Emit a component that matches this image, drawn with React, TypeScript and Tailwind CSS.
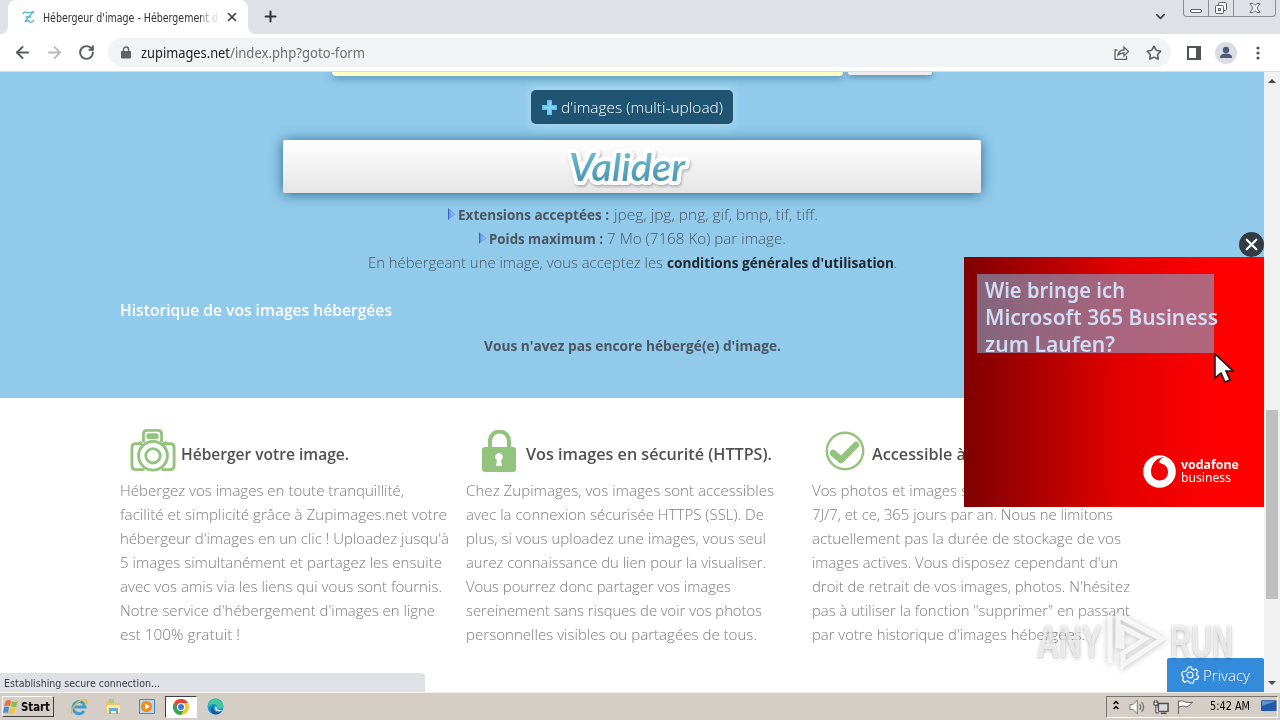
import { ReactNode, useLayoutEffect, useRef, useState } from 'react';
import { ArrowLeft, ArrowRight, ChevronDown, Plus, RotateCw, Star, X } from 'lucide-react';

interface FitProps {
  w: number;
  children: ReactNode;
  className?: string;
}

// Squeezes or stretches one run of text to a fixed width
function Fit({ w, children, className = '' }: FitProps) {
  const ref = useRef<HTMLSpanElement>(null);
  const [scale, setScale] = useState(1);

  useLayoutEffect(() => {
    if (ref.current) {
      setScale(w / ref.current.getBoundingClientRect().width);
    }
  }, [w]);

  return (
    <span className={`inline-block whitespace-nowrap ${className}`} style={{ width: w }}>
      <span ref={ref} className="inline-block origin-left whitespace-pre" style={{ transform: `scaleX(${scale})` }}>
        {children}
      </span>
    </span>
  );
}

const columns: { title: string; titleWidth: number; icon: ReactNode; lines: [string, number][] }[] = [
  {
    title: 'Héberger votre image.',
    titleWidth: 168,
    icon: <CameraIcon />,
    lines: [
      ['Hébergez vos images en toute tranquillité,', 284],
      ['facilité et simplicité grâce à Zupimages.net votre', 327],
      ["hébergeur d'images en un clic ! Uploadez jusqu'à", 329],
      ['5 images simultanément et partagez les ensuite', 322],
      ['avec vos amis via les liens qui vous sont fournis.', 322],
      ["Notre service d'hébergement d'images en ligne", 315],
      ['est 100% gratuit !', 120],
    ],
  },
  {
    title: 'Vos images en sécurité (HTTPS).',
    titleWidth: 246,
    icon: <LockIcon />,
    lines: [
      ['Chez Zupimages, vos images sont accessibles', 308],
      ['avec la connexion sécurisée HTTPS (SSL). De', 298],
      ['plus, si vous uploadez une images, vous seul', 300],
      ['aurez connaissance du lien pour la visualiser.', 300],
      ['Vous pourrez donc partager vos images', 265],
      ['sereinement sans risques de voir vos photos', 296],
      ['personnelles visibles ou partagées de tous.', 291],
    ],
  },
  {
    title: 'Accessible à',
    titleWidth: 94,
    icon: <CheckIcon />,
    lines: [
      ['Vos photos et images s', 156],
      ['7J/7, et ce, 365 jours par an. Nous ne limitons', 301],
      ['actuellement pas la durée de stockage de vos', 309],
      ["images actives. Vous disposez cependant d'un", 306],
      ["droit de retrait de vos images, photos. N'hésitez", 318],
      ['pas à utiliser la fonction "supprimer" en passant', 318],
      ["par votre historique d'images hébergées.", 273],
    ],
  },
];

function CameraIcon() {
  return (
    <svg width="46" height="45" viewBox="0 0 48 46" fill="none" stroke="#92c47d" strokeWidth="3" className="ml-[10px]">
      <path d="M14 14V6q0-4 4-4h11q4 0 4 4v8M13 16H6q-4 0-4 4v19q0 4 4 4h9M34 16h8q4 0 4 4v19q0 4-4 4h-9M9 17l3-3M36 14l3 3" />
      <rect x="18.5" y="6.5" width="10" height="3" rx="1.5" />
      <circle cx="24" cy="28.5" r="15" />
      <circle cx="24" cy="28.5" r="7.5" />
    </svg>
  );
}

function LockIcon() {
  return (
    <svg width="34" height="43" viewBox="0 0 34 43" className="ml-4">
      <path d="M8 19V11a9.5 9.5 0 0 1 19 0v8" fill="none" stroke="#92c47d" strokeWidth="4" />
      <rect y="17" width="34" height="25" rx="3" fill="#92c47d" />
      <path d="M17 23a3.8 3.8 0 0 1 2 7l1 6h-6l1-6a3.8 3.8 0 0 1 2-7z" fill="white" />
    </svg>
  );
}

function CheckIcon() {
  return (
    <svg width="40" height="40" viewBox="0 0 40 40" fill="none" stroke="#92c47d" className="mb-px ml-[13px]">
      <circle cx="20" cy="20" r="18.2" strokeWidth="2.4" />
      <path d="M8 22l8 7L31 14" strokeWidth="6.5" strokeLinecap="round" strokeLinejoin="round" />
    </svg>
  );
}

function TabStrip() {
  return (
    <div className="flex h-[34px] bg-[#dee1e6] pl-2 font-['DejaVu_Sans',sans-serif] font-normal">
      <div className="relative flex w-60 items-center rounded-t-lg bg-white">
        <svg width="8" height="8" className="absolute bottom-0 -left-2" fill="white"><path d="M8 0v8H0q8 0 8-8" /></svg>
        <svg width="8" height="8" className="absolute -right-2 bottom-0" fill="white"><path d="M0 0v8h8Q0 8 0 0" /></svg>
        <svg width="13" height="14" viewBox="0 0 14 14" className="ml-[14px] shrink-0" fill="none" stroke="#5ab3cf" strokeWidth="1.4">
          <path d="M1 4q1-3 4-2t8-1Q9 4 3 12q3-2 5 0t5-2M4 7h6" />
        </svg>
        <div className="relative ml-[8px] w-[175px] overflow-hidden">
          <Fit w={175} className="block text-[11.5px] leading-4 text-[#303236]">Hébergeur d'image - Hébergement d</Fit>
          <div className="absolute top-0 right-0 h-4 w-4 bg-linear-to-r from-white/40 to-white/90" />
        </div>
        <X size={14} strokeWidth={2.8} className="ml-[7px] shrink-0 text-[#3c4043]" />
      </div>
      <Plus size={17} strokeWidth={2.8} className="mt-2 ml-[14px] text-[#303439]" />
      <ChevronDown size={15} strokeWidth={2.8} className="mt-[9px] ml-auto text-[#40444b]" />
      <div className="mr-1 ml-[15px] flex h-[17px] w-[93px] rounded-b-[4px] border border-t-0 border-[#888c93] text-[#5e6269]">
        <div className="flex w-[25px] items-end justify-center border-r border-[#888c93] pb-[3px]">
          <div className="h-1 w-3 rounded-xs border border-[#5e6269] bg-white" />
        </div>
        <div className="flex w-[25px] justify-center border-r border-[#888c93]">
          <svg width="14" height="15" fill="white" stroke="currentColor"><rect x="4.5" y="2.5" width="8" height="8" rx="1" /><rect x="1.5" y="5.5" width="8" height="8" rx="1" /><rect x="4.5" y="8.5" width="2" height="2" /></svg>
        </div>
        <div className="flex flex-1 justify-center pt-[2px]">
          <svg width="12" height="12" fill="white" stroke="currentColor"><path d="M1 1.5h3l2 2 2-2h3L8 6l3 4.5H8l-2-2-2 2H1L4 6z" /></svg>
        </div>
      </div>
    </div>
  );
}

function Toolbar() {
  return (
    <div className="flex h-[38px] items-center border-b border-[#dadce0] bg-white pl-px text-[#5a5d61]">
      <ArrowLeft size={19} strokeWidth={2.5} className="ml-3" />
      <ArrowRight size={19} strokeWidth={2.3} className="ml-[13px] text-[#b8babd]" />
      <RotateCw size={17} strokeWidth={2.8} className="ml-[14px]" />
      <div className="ml-[13px] flex h-[29px] w-[1063px] items-center rounded-full bg-[#f1f3f4] text-[14px]">
        <svg width="10" height="13" viewBox="0 0 10 13" className="ml-[13px]"><path d="M2.5 6V3.5a2.5 2.5 0 0 1 5 0V6" fill="none" stroke="#5f6368" strokeWidth="1.4" /><rect y="5" width="10" height="7.5" rx="1" fill="#5f6368" /></svg>
        <Fit w={89} className="ml-[10px] font-['Noto_Sans',sans-serif] font-normal text-[#202124]">zupimages.net</Fit>
        <Fit w={135} className="font-['Noto_Sans',sans-serif] font-normal text-[#6c7075]">/index.php?goto-form</Fit>
        <svg width="16" height="16" viewBox="0 0 16 16" fill="none" stroke="#5f6368" strokeWidth="1.3" className="ml-auto">
          <path d="M3.500 5H1v9.300h11.500V11M4 10q1-5 6-5V2l4.500 4.500L10 11V8q-4 0-6 2z" />
        </svg>
        <Star size={16} strokeWidth={2.4} className="mr-[9px] ml-4" />
      </div>
      <div className="ml-4 h-3.5 w-3.5 border-2 border-r-[5px] border-[#505357]" />
      <svg width="22" height="22" viewBox="0 0 22 22" className="ml-[14px]"><circle cx="11" cy="11" r="11" fill="#dadde2" /><circle cx="11" cy="8" r="3.2" fill="#4e5b78" /><path d="M5 16v-1.5q1-3 6-3t6 3V16z" fill="#4e5b78" /></svg>
      <svg width="4" height="14" className="ml-[19px]" fill="#505357"><circle cx="2" cy="2" r="1.6" /><circle cx="2" cy="7" r="1.6" /><circle cx="2" cy="12" r="1.6" /></svg>
    </div>
  );
}

function Marker() {
  return (
    <svg width="9" height="12" viewBox="0 0 9 12" className="mr-[2px]">
      <defs>
        <linearGradient id="marker"><stop stopColor="#5686e2" /><stop offset="1" stopColor="#c0e0fa" /></linearGradient>
      </defs>
      <path d="M1.500 1L8 6 1.500 11z" fill="url(#marker)" stroke="#6b9ae4" />
      <path d="M1.500 .5v11" stroke="#3563c9" />
    </svg>
  );
}

function UploadForm() {
  return (
    <section className="relative flex h-[326px] flex-col items-center overflow-hidden bg-[#91caeb] text-[#4b5560]">
      <div className="flex h-[4px] w-[600px] items-start gap-[5px]">
        <div className="h-1 w-[511px] rounded-b-[4px] bg-[#fffec4] shadow-[0_1px_9px_#286789]" />
        <div className="h-[3px] w-[84px] rounded-b-xs bg-[#ececf1] shadow-[0_1px_6px_#28506e]" />
      </div>
      <div className="relative z-10 mt-[14px] flex h-[34px] w-[202px] items-center rounded-[5px] bg-[#1f5573] pl-[11px] text-white shadow-[0_0_12px_#b6deee]">
        <svg width="15" height="15" viewBox="0 0 15 15"><path d="M5 0h5v5h5v5h-5v5H5v-5H0V5h5z" fill="#62c1f0" /><path d="M6.500 1.500h2v5h5v2h-5v5h-2v-5h-5v-2h5z" fill="#8ad4f7" /></svg>
        <Fit w={162} className="ml-[4px]">d'images (multi-upload)</Fit>
      </div>
      <button className="mt-4 flex h-[53px] w-[698px] justify-center rounded-xs bg-linear-to-b from-white to-[#e5e5e5] shadow-[0_1px_13px_#286789]">
        <svg width="126" height="53" viewBox="0 0 126 53" className="mr-[6px] drop-shadow-[1px_2px_1px_#b4b4b4]">
          <defs>
            <linearGradient id="valider" x2="0" y2="1"><stop offset="0" stopColor="#78c5dc" /><stop offset="1" stopColor="#428ba8" /></linearGradient>
          </defs>
          <text x="3" y="41" textLength="116" lengthAdjust="spacingAndGlyphs" fontFamily="Lato, sans-serif" fontStyle="italic" fontWeight="600" fontSize="38" fill="url(#valider)" stroke="white" strokeWidth="8" strokeLinejoin="round" paintOrder="stroke">Valider</text>
        </svg>
      </button>
      <div className="mt-[10px] flex h-6 items-center pb-[2px]">
        <Marker />
        <Fit w={151} className="font-bold">Extensions acceptées :</Fit>
        <Fit w={204} className="ml-[5px]">jpeg, jpg, png, gif, bmp, tif, tiff.</Fit>
      </div>
      <div className="flex h-6 items-center pb-[2px]">
        <Marker />
        <Fit w={114} className="font-bold">Poids maximum :</Fit>
        <Fit w={179} className="mr-px ml-[4px]">7 Mo (7168 Ko) par image.</Fit>
      </div>
      <div className="flex h-6 items-center pb-[2px]">
        <Fit w={295}>En hébergeant une image, vous acceptez les</Fit>
        <Fit w={227} className="ml-[4px] font-bold text-[#20272e]">conditions générales d'utilisation</Fit>
        <span className="w-[3px]">.</span>
      </div>
      <h2 className="mt-[23px] h-6 w-[1024px] text-[17px] leading-6 font-semibold text-white">
        <Fit w={272}>Historique de vos images hébergées</Fit>
      </h2>
      <p className="mt-3 h-6 leading-[22px] font-bold">
        <Fit w={297}>Vous n'avez pas encore hébergé(e) d'image.</Fit>
      </p>
    </section>
  );
}

function Advert() {
  return (
    <div className="absolute top-[160px] right-4 w-[300px]">
      <div className="ml-auto flex h-[25px] w-[25px] items-center justify-center rounded-full bg-[#343b42] text-white">
        <X size={19} strokeWidth={3} />
      </div>
      <div className="h-[250px] bg-linear-to-r from-[#800000] via-[#e30000] via-52% to-[#ff0000] to-85% pt-[17px] pl-[13px] font-['Noto_Sans',sans-serif] text-[22px] leading-[27px] font-semibold text-[#d0dcf4]">
        <div className="flex h-[79px] w-[237px] flex-col bg-[#82a8d0]/60 pt-[2px] pl-2">
          <Fit w={140} className="h-[27px]">Wie bringe ich</Fit>
          <Fit w={233} className="h-[27px]">Microsoft 365 Business</Fit>
          <Fit w={130} className="h-[27px]">zum Laufen?</Fit>
        </div>
        <div className="mt-[102px] ml-[166px] flex text-white">
          <svg width="33" height="33" viewBox="0 0 33 33">
            <circle cx="16.5" cy="16.5" r="16.3" fill="white" />
            <path d="M22 2c-5 1-6 4-5.500 6C22 9 25 12 25 17s-4 8.500-8.500 8.500S8 22 8 16.500C8 9 14 2 22 2z" fill="#f40000" />
          </svg>
          <div className="ml-[5px] flex flex-col gap-[2px] pt-[3px] text-[13px] leading-[13px]">
            <Fit w={58} className="h-[11px] font-bold">vodafone</Fit>
            <Fit w={50} className="h-[11px] font-normal">business</Fit>
          </div>
        </div>
      </div>
    </div>
  );
}

function Watermark() {
  return (
    <div className="absolute right-[47px] bottom-[20px] flex items-center font-['Liberation_Sans',sans-serif] text-[46px] leading-none font-bold text-white/70 [text-shadow:0_2px_5px_#0003,0_0_2px_#0003]">
      <Fit w={65}>ANY</Fit>
      <svg width="68" height="62" viewBox="0 0 68 62" fill="none" stroke="white" strokeOpacity=".75" strokeWidth="5" className="drop-shadow-[0_1px_3px_#0005]">
        <path d="M8 5v48M16 3v35M17 6l43 23-39 26v-12l22-14L20 17v22" />
      </svg>
      <Fit w={63}>RUN</Fit>
    </div>
  );
}

function Scrollbar() {
  return (
    <div className="flex w-4 flex-col items-center bg-[#f1f1f1]">
      <svg width="8" height="5" className="mt-[6px]" fill="#45484b"><path d="M0 5l4-4 4 4z" /></svg>
      <div className="mt-[327px] h-[189px] w-3 bg-[#bfbfbf]" />
      <svg width="8" height="5" className="mt-auto mb-[6px]" fill="#45484b"><path d="M0 0h8L4 4z" /></svg>
    </div>
  );
}

function Taskbar() {
  return (
    <div className="flex h-7 items-center border-t border-[#f3f0ec] bg-[#d5cec6] font-['DejaVu_Sans',sans-serif] text-[12px] font-normal text-black">
      <div className="ml-[2px] flex h-[21px] w-[52px] items-center border border-t-white border-r-[#404040] border-b-[#404040] border-l-white">
        <svg width="16" height="16" viewBox="0 0 16 16"><path d="M3 2q3-2 5 0L7 7Q4 6 1 7z" fill="#ed7042" /><path d="M9 2q3 2 6 0l-2 6q-3 1-5-1z" fill="#8cbf47" /><path d="M1 8q3-1 5 0l-1 6q-3-1-5 0z" fill="#4991d4" /><path d="M7 9q3 1 6 0l-2 5q-3 2-5 0z" fill="#f4c441" /></svg>
        <Fit w={29} className="ml-[2px] font-bold">Start</Fit>
      </div>
      <svg width="18" height="18" viewBox="0 0 18 18" className="ml-4" fill="none"><path d="M14 13a6 6 0 1 1 1-4H5" stroke="#3b9ed8" strokeWidth="3" /><path d="M2 16Q0 12 6 6t10-4q2 1-1 5" stroke="#eabb35" strokeWidth="1.4" /></svg>
      <svg width="17" height="17" viewBox="0 0 17 17" className="ml-[17px]"><path d="M1 3h6l2 2h6v11H1z" fill="#e9c66c" /><path d="M2 7h13v8H2z" fill="#fae9ab" /><path d="M4 16v-6h9v6h-2v-3H6v3z" fill="#63afd6" /><path d="M4 1h5v4H4z" fill="#a9cf7b" /></svg>
      <svg width="16" height="17" viewBox="0 0 16 17" className="ml-[17px]"><path d="M.5 1.500h15v14H.5z" fill="#b8d7ec" stroke="#4c89b9" /><circle cx="7.500" cy="8.500" r="5.500" fill="#f28a13" /><path d="M6 5.500v6l5-3z" fill="white" /></svg>
      <div className="ml-[10px] flex h-[22px] w-[32px] items-center justify-center border border-t-[#404040] border-r-white border-b-white border-l-[#404040] bg-white">
        <svg width="16" height="16" viewBox="0 0 16 16"><circle cx="8" cy="8" r="8" fill="#f9c623" /><path d="M1 4a8 8 0 0 1 14 0H8L6 12z" fill="#df4636" /><path d="M1 4a8 8 0 0 0 7 12l3-6H5z" fill="#32a458" /><circle cx="8" cy="8" r="4" fill="white" /><circle cx="8" cy="8" r="3" fill="#3c79e6" /></svg>
      </div>
      <svg width="17" height="17" viewBox="0 0 17 17" className="ml-[10px]"><circle cx="8.500" cy="8.500" r="8" fill="#1a90cf" /><path d="M2 4q6-7 13 0 2 3 1 5-2 3-7 1 2-4-2-4-4 0-6 4z" fill="#43c9a0" /><path d="M7 7q-3 5 2 7 3 1 6-1-5 6-10 2-3-4 2-8z" fill="#1259a2" /><path d="M9 8q0 5 6 4l-1 1q-6 1-6-3z" fill="#eef7fa" /></svg>
      <div className="ml-auto mr-[2px] flex h-[22px] w-[172px] items-center border border-t-[#77736e] border-r-white border-b-white border-l-[#77736e]">
        <svg width="6" height="10" className="mb-[3px] ml-[6px]" fill="none" stroke="black" strokeWidth="1.5"><path d="M.5 4L3 1.500 5.500 4M.5 9L3 6.500 5.500 9" /></svg>
        <svg width="17" height="16" viewBox="0 0 17 16" className="ml-[10px]" fill="none" stroke="#77736e"><path d="M1 5.500h3L8.500 1v14L4 10.500H1z" fill="white" /><path d="M11 5q2 3 0 6M13 3q4 5 0 10" strokeWidth="1.3" /></svg>
        <svg width="17" height="16" viewBox="0 0 17 16" className="ml-2" fill="none" stroke="#4f4e4c"><path d="M5.500 4.500h10v8h-10zM8 14.500h6" fill="#d6dade" strokeWidth="1.5" /><path d="M1 2v4h4V2M2 1v3M4 1v3M3 6v8h3" stroke="#333" fill="white" /></svg>
        <svg width="17" height="16" viewBox="0 0 17 16" className="ml-[7px]" fill="white" stroke="#5f5c58"><path d="M1.500 15V1.500M2 2q4-1 7 1 3 1 7 0l-4 4q-3 2-5 0-2 0-5 1" /></svg>
        <Fit w={40} className="ml-[17px] text-[11.5px]">5:42 AM</Fit>
        <svg width="16" height="13" viewBox="0 0 16 13" className="ml-[11px]"><rect width="16" height="11" rx="1" fill="#2458a8" /><path d="M1 1h14L1 6z" fill="#5d94d8" /><path d="M3 12h10" stroke="#b7cce4" /></svg>
      </div>
    </div>
  );
}

export default function App() {
  return (
    <div className="relative flex h-[720px] w-[1280px] flex-col overflow-hidden bg-white font-['Open_Sans',sans-serif] text-[15px] font-light">
      <TabStrip />
      <Toolbar />
      <div className="relative flex h-[620px] overflow-hidden">
        <main className="w-[1264px]">
          <UploadForm />
          <div className="flex gap-4 pl-[120px]">
            {columns.map((col, i) => (
              <section key={col.title} className="w-[330px] pt-[29px] text-[#7b7b7b]">
                <div className="flex h-[47px] items-end">
                  <div className={`flex h-[47px] shrink-0 items-end ${i === 0 ? 'w-[61px]' : 'w-[60px]'} ${i === 2 ? 'pb-[2px]' : 'pb-px'}`}>
                    {col.icon}
                  </div>
                  <h3 className="h-9 pt-1 text-[17px] leading-6 font-semibold text-[#505050]">
                    <Fit w={col.titleWidth}>{col.title}</Fit>
                  </h3>
                </div>
                <div className="mt-[4px] flex flex-col">
                  {col.lines.map(([line, width]) => (
                    <Fit key={line} w={width} className="h-6 leading-6">{line}</Fit>
                  ))}
                </div>
              </section>
            ))}
          </div>
        </main>
        <Scrollbar />
        <Advert />

        {/* Status bubble */}
        <div className="absolute bottom-0 left-0 h-[19px] w-[425px] rounded-tr-[4px] bg-[#dee1e6] pl-1 font-['DejaVu_Sans',sans-serif] text-[11px] leading-[21px] font-normal text-[#3c4043]">
          <Fit w={156}>Establishing secure connection...</Fit>
        </div>

        {/* Privacy button */}
        <div className="absolute right-4 bottom-0 flex h-[34px] w-[97px] items-center rounded-t-xs bg-[#348adb] pl-[14px] text-white">
          <svg width="18" height="18" viewBox="0 0 18 18" fill="none" stroke="white" strokeWidth="1.2">
            <path d="M7.500 1h3l.5 2.300 1.600.8L14.800 3l2 2.500-1.300 2 .4 1.700 1.700 1.300-1.300 2.800-2.500.1-1.200 1.200-.2 2.400H9l-1.600-1.800H5.800l-2.200 1L1.500 14l.9-2.200-.7-1.700L.5 8.300l1.300-2.700 2.500-.1 1.500-1.400z" />
            <circle cx="9" cy="9" r="3" />
          </svg>
          <Fit w={47} className="ml-1">Privacy</Fit>
        </div>

        <Watermark />

        {/* Mouse pointer */}
        <svg width="20" height="30" viewBox="0 0 20 30" className="absolute top-[281px] left-[1214px]">
          <path d="M1 1v24l6-5 4 9 5-2-4-9h7z" fill="white" stroke="#22191b" strokeWidth="1.6" />
        </svg>
      </div>
      <Taskbar />
    </div>
  );
}
